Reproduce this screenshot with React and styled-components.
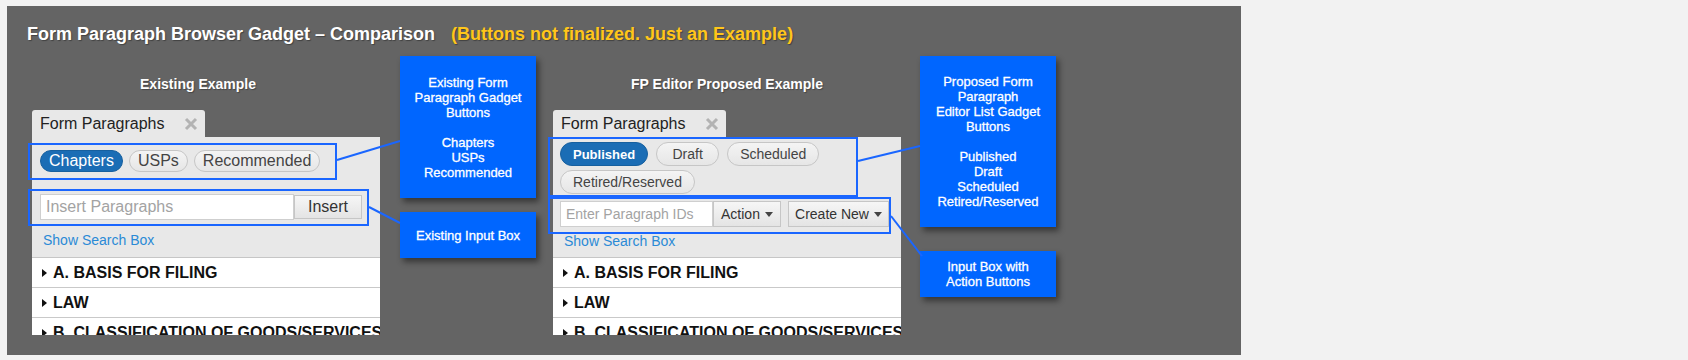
import React from 'react';
import styled, { createGlobalStyle } from 'styled-components';

const Global = createGlobalStyle`
  html, body { margin: 0; padding: 0; background: #f2f2f2; }
  body { font-family: "Liberation Sans", Arial, Helvetica, sans-serif; }
  * { box-sizing: border-box; }
`;

const Page = styled.div`
  padding: 6px 0 0 7px;
`;

const Stage = styled.div`
  position: relative;
  width: 1234px;
  height: 349px;
  background: #646464;
  padding: 17px 0 0 20px;
`;

const TitleRow = styled.h1`
  margin: 0;
  display: flex;
  gap: 16px;
  font-size: 18px;
  line-height: 22px;
  font-weight: 700;
  color: #ffffff;
  text-shadow: 1px 1px 1px rgba(0, 0, 0, 0.35);
`;

const Note = styled.span`
  color: #ffc61a;
`;

const Board = styled.div`
  display: flex;
  align-items: flex-start;
  margin: 11px 0 0 5px;
`;

const GadgetColumn = styled.section`
  width: 348px;
  margin-left: ${p => p.$ml || 0}px;
  display: flex;
  flex-direction: column;
`;

const Heading = styled.h2`
  margin: 20px 0 18px;
  padding-right: ${p => p.$pr || 0}px;
  font-size: 14px;
  line-height: 16px;
  font-weight: 700;
  color: #ffffff;
  text-align: center;
  text-shadow: 1px 1px 1px rgba(0, 0, 0, 0.3);
`;

const Tab = styled.div`
  width: 173px;
  height: 27px;
  background: #e8e8e8;
  border-radius: 3px 3px 0 0;
  display: flex;
  align-items: center;
  justify-content: space-between;
  padding: 0 7px 0 8px;
  font-size: 16px;
  color: #222;
`;

const Panel = styled.div`
  width: 348px;
  height: 198px;
  background: #e8e8e8;
  display: flex;
  flex-direction: column;
`;

const Controls = styled.div`
  height: 120px;
  display: flex;
  flex-direction: column;
  align-items: flex-start;
`;

const Highlight = styled.div`
  border: 2px solid #1a66ff;
  margin-left: ${p => p.$ml}px;
  margin-top: ${p => p.$mt}px;
  width: ${p => p.$w}px;
  padding: ${p => p.$pad};
`;

const PillGroup = styled.div`
  display: flex;
  flex-wrap: wrap;
  column-gap: ${p => p.$gap}px;
  row-gap: 4px;
`;

const Pill = styled.span`
  display: inline-flex;
  align-items: center;
  justify-content: center;
  height: ${p => (p.$compact ? 24 : 22)}px;
  min-width: ${p => p.$minW || 0}px;
  padding: 0 ${p => (p.$compact ? 12 : 8)}px;
  border-radius: 12px;
  font-size: ${p => (p.$compact ? (p.$active ? 13 : 14) : 16)}px;
  font-weight: ${p => (p.$compact && p.$active ? 700 : 400)};
  color: ${p => (p.$active ? '#ffffff' : '#444')};
  background: ${p => (p.$active ? '#1b6db5' : 'linear-gradient(#f4f4f4, #e6e6e6)')};
  border: 1px solid ${p => (p.$active ? '#17609f' : '#c6c6c6')};
`;

const InputGroup = styled.div`
  display: flex;
  align-items: center;
`;

const TextField = styled.input`
  width: ${p => p.$w}px;
  height: 26px;
  border: 1px solid #cfcfcf;
  background: #fff;
  padding: 0 5px;
  font-family: inherit;
  font-size: ${p => p.$fs}px;
  color: #333;
  outline: none;
  &::placeholder { color: #a3a3a3; }
`;

const Button = styled.span`
  display: inline-flex;
  align-items: center;
  justify-content: center;
  gap: 5px;
  width: ${p => p.$w}px;
  height: ${p => p.$h}px;
  margin-left: ${p => p.$ml || 0}px;
  background: linear-gradient(#f6f6f6, #e4e4e4);
  border: 1px solid #c6c6c6;
  font-size: ${p => p.$fs}px;
  color: #333;
`;

const Caret = styled.span`
  width: 0;
  height: 0;
  border-left: 4px solid transparent;
  border-right: 4px solid transparent;
  border-top: 5px solid #444;
`;

const Link = styled.span`
  margin: ${p => p.$mt}px 0 0 11px;
  font-size: 14px;
  line-height: 16px;
  color: #2a8ad6;
`;

const List = styled.ul`
  list-style: none;
  margin: 0;
  padding: 0;
  flex: 1;
  background: #fff;
  border-top: 1px solid #c6c6c6;
  overflow: hidden;
`;

const Row = styled.li`
  height: 30px;
  display: flex;
  align-items: center;
  gap: 6px;
  padding-left: 10px;
  border-bottom: 1px solid #c9c9c9;
  font-size: 16px;
  font-weight: 700;
  color: #111;
  white-space: nowrap;
`;

const Arrow = styled.span`
  flex: none;
  width: 0;
  height: 0;
  border-top: 4px solid transparent;
  border-bottom: 4px solid transparent;
  border-left: 5px solid #111;
`;

const CalloutStack = styled.div`
  display: flex;
  flex-direction: column;
  gap: ${p => p.$gap}px;
  margin-left: ${p => p.$ml}px;
`;

const Callout = styled.div`
  width: 136px;
  height: ${p => p.$h}px;
  background: #0066ff;
  color: #fff;
  font-size: 13px;
  line-height: 15px;
  text-align: center;
  display: flex;
  align-items: center;
  justify-content: center;
  -webkit-text-stroke: 0.3px #ffffff;
  box-shadow: 3px 4px 6px rgba(0, 0, 0, 0.45);
`;

const Connectors = styled.svg`
  position: absolute;
  left: 0;
  top: 0;
  pointer-events: none;
`;

const CloseIcon = () => (
  <svg width="14" height="14" viewBox="0 0 14 14">
    <path d="M2 2 L12 12 M12 2 L2 12" stroke="#b3b3b3" strokeWidth="3" strokeLinecap="butt" />
  </svg>
);

const ListRows = () => (
  <List>
    {['A. BASIS FOR FILING', 'LAW', 'B. CLASSIFICATION OF GOODS/SERVICES'].map(t => (
      <Row key={t}>
        <Arrow />
        {t}
      </Row>
    ))}
  </List>
);

const GadgetTab = () => (
  <Tab>
    <span>Form Paragraphs</span>
    <CloseIcon />
  </Tab>
);

export default function App() {
  return (
    <Page>
      <Global />
      <Stage>
        <TitleRow>
          <span>Form Paragraph Browser Gadget – Comparison</span>
          <Note>(Buttons not finalized. Just an Example)</Note>
        </TitleRow>
        <Board>
          <GadgetColumn>
            <Heading $pr={16}>Existing Example</Heading>
            <GadgetTab />
            <Panel>
              <Controls>
                <Highlight $ml={-4} $mt={6} $w={309} $pad="5px 0 6px 10px">
                  <PillGroup $gap={6}>
                    <Pill $active>Chapters</Pill>
                    <Pill>USPs</Pill>
                    <Pill>Recommended</Pill>
                  </PillGroup>
                </Highlight>
                <Highlight $ml={-4} $mt={9} $w={341} $pad="3px 5px 4px 10px">
                  <InputGroup>
                    <TextField $w={254} $fs={16} placeholder="Insert Paragraphs" />
                    <Button $w={68} $h={24} $fs={16} $ml={0}>Insert</Button>
                  </InputGroup>
                </Highlight>
                <Link $mt={6}>Show Search Box</Link>
              </Controls>
              <ListRows />
            </Panel>
          </GadgetColumn>

          <CalloutStack $ml={20} $gap={14}>
            <Callout $h={142}>
              <div>
                Existing Form<br />Paragraph Gadget<br />Buttons<br /><br />Chapters<br />USPs<br />Recommended
              </div>
            </Callout>
            <Callout $h={46}>Existing Input Box</Callout>
          </CalloutStack>

          <GadgetColumn $ml={17}>
            <Heading>FP Editor Proposed Example</Heading>
            <GadgetTab />
            <Panel>
              <Controls>
                <Highlight $ml={-5} $mt={0} $w={310} $pad="3px 0 1px 10px">
                  <PillGroup $gap={8}>
                    <Pill $compact $active>Published</Pill>
                    <Pill $compact $minW={63}>Draft</Pill>
                    <Pill $compact>Scheduled</Pill>
                    <Pill $compact>Retired/Reserved</Pill>
                  </PillGroup>
                </Highlight>
                <Highlight $ml={-5} $mt={0} $w={343} $pad="2px 0 5px 10px">
                  <InputGroup>
                    <TextField $w={153} $fs={14} placeholder="Enter Paragraph IDs" />
                    <Button $w={68} $h={26} $fs={14}>Action<Caret /></Button>
                    <Button $w={101} $h={26} $fs={14} $ml={7}>Create New<Caret /></Button>
                  </InputGroup>
                </Highlight>
                <Link $mt={-1}>Show Search Box</Link>
              </Controls>
              <ListRows />
            </Panel>
          </GadgetColumn>

          <CalloutStack $ml={19} $gap={24}>
            <Callout $h={171}>
              <div>
                Proposed Form<br />Paragraph<br />Editor List Gadget<br />Buttons<br /><br />Published<br />Draft<br />Scheduled<br />Retired/Reserved
              </div>
            </Callout>
            <Callout $h={46}>
              <div>Input Box with<br />Action Buttons</div>
            </Callout>
          </CalloutStack>
        </Board>
        <Connectors width="1234" height="349">
          <g stroke="#1a66ff" strokeWidth="2">
            <line x1="330" y1="154" x2="393" y2="135" />
            <line x1="362" y1="201" x2="393" y2="217" />
            <line x1="851" y1="155" x2="913" y2="140" />
            <line x1="884" y1="210" x2="915" y2="250" />
          </g>
        </Connectors>
      </Stage>
    </Page>
  );
}
